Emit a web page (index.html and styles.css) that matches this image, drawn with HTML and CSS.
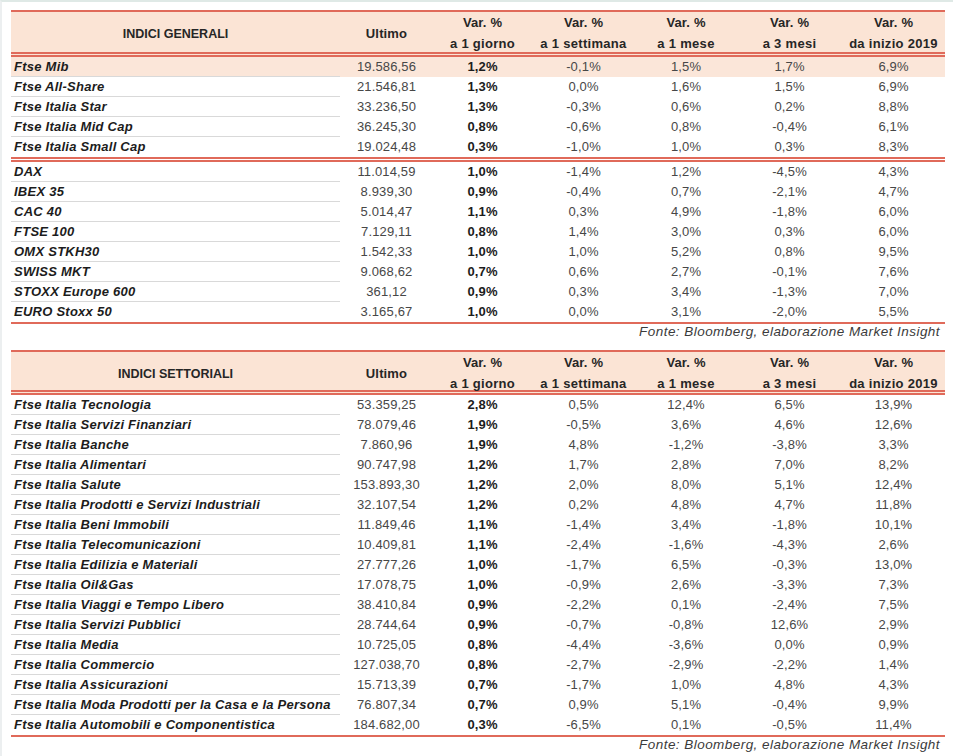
FILE: index.html
```html
<!DOCTYPE html>
<html lang="it">
<head>
<meta charset="utf-8">
<title>Indici</title>
<link rel="stylesheet" href="styles.css">
</head>
<body>
<div class="page">
  <section class="tbl">
    <div class="row head">
      <div class="c name">INDICI GENERALI</div>
      <div class="c">Ultimo</div>
      <div class="c two"><span>Var. %</span><span>a 1 giorno</span></div>
      <div class="c two"><span>Var. %</span><span>a 1 settimana</span></div>
      <div class="c two"><span>Var. %</span><span>a 1 mese</span></div>
      <div class="c two"><span>Var. %</span><span>a 3 mesi</span></div>
      <div class="c two"><span>Var. %</span><span>da inizio 2019</span></div>
    </div>
    <div class="row hl"><div class="c name">Ftse Mib</div><div class="c">19.586,56</div><div class="c b">1,2%</div><div class="c">-0,1%</div><div class="c">1,5%</div><div class="c">1,7%</div><div class="c">6,9%</div></div>
    <div class="row"><div class="c name">Ftse All-Share</div><div class="c">21.546,81</div><div class="c b">1,3%</div><div class="c">0,0%</div><div class="c">1,6%</div><div class="c">1,5%</div><div class="c">6,9%</div></div>
    <div class="row"><div class="c name">Ftse Italia Star</div><div class="c">33.236,50</div><div class="c b">1,3%</div><div class="c">-0,3%</div><div class="c">0,6%</div><div class="c">0,2%</div><div class="c">8,8%</div></div>
    <div class="row"><div class="c name">Ftse Italia Mid Cap</div><div class="c">36.245,30</div><div class="c b">0,8%</div><div class="c">-0,6%</div><div class="c">0,8%</div><div class="c">-0,4%</div><div class="c">6,1%</div></div>
    <div class="row split"><div class="c name">Ftse Italia Small Cap</div><div class="c">19.024,48</div><div class="c b">0,3%</div><div class="c">-1,0%</div><div class="c">1,0%</div><div class="c">0,3%</div><div class="c">8,3%</div></div>
    <div class="row"><div class="c name">DAX</div><div class="c">11.014,59</div><div class="c b">1,0%</div><div class="c">-1,4%</div><div class="c">1,2%</div><div class="c">-4,5%</div><div class="c">4,3%</div></div>
    <div class="row"><div class="c name">IBEX 35</div><div class="c">8.939,30</div><div class="c b">0,9%</div><div class="c">-0,4%</div><div class="c">0,7%</div><div class="c">-2,1%</div><div class="c">4,7%</div></div>
    <div class="row"><div class="c name">CAC 40</div><div class="c">5.014,47</div><div class="c b">1,1%</div><div class="c">0,3%</div><div class="c">4,9%</div><div class="c">-1,8%</div><div class="c">6,0%</div></div>
    <div class="row"><div class="c name">FTSE 100</div><div class="c">7.129,11</div><div class="c b">0,8%</div><div class="c">1,4%</div><div class="c">3,0%</div><div class="c">0,3%</div><div class="c">6,0%</div></div>
    <div class="row"><div class="c name">OMX STKH30</div><div class="c">1.542,33</div><div class="c b">1,0%</div><div class="c">1,0%</div><div class="c">5,2%</div><div class="c">0,8%</div><div class="c">9,5%</div></div>
    <div class="row"><div class="c name">SWISS MKT</div><div class="c">9.068,62</div><div class="c b">0,7%</div><div class="c">0,6%</div><div class="c">2,7%</div><div class="c">-0,1%</div><div class="c">7,6%</div></div>
    <div class="row"><div class="c name">STOXX Europe 600</div><div class="c">361,12</div><div class="c b">0,9%</div><div class="c">0,3%</div><div class="c">3,4%</div><div class="c">-1,3%</div><div class="c">7,0%</div></div>
    <div class="row last"><div class="c name">EURO Stoxx 50</div><div class="c">3.165,67</div><div class="c b">1,0%</div><div class="c">0,0%</div><div class="c">3,1%</div><div class="c">-2,0%</div><div class="c">5,5%</div></div>
  </section>
  <p class="src">Fonte: Bloomberg, elaborazione Market Insight</p>

  <section class="tbl second">
    <div class="row head short">
      <div class="c name">INDICI SETTORIALI</div>
      <div class="c">Ultimo</div>
      <div class="c two"><span>Var. %</span><span>a 1 giorno</span></div>
      <div class="c two"><span>Var. %</span><span>a 1 settimana</span></div>
      <div class="c two"><span>Var. %</span><span>a 1 mese</span></div>
      <div class="c two"><span>Var. %</span><span>a 3 mesi</span></div>
      <div class="c two"><span>Var. %</span><span>da inizio 2019</span></div>
    </div>
    <div class="row"><div class="c name">Ftse Italia Tecnologia</div><div class="c">53.359,25</div><div class="c b">2,8%</div><div class="c">0,5%</div><div class="c">12,4%</div><div class="c">6,5%</div><div class="c">13,9%</div></div>
    <div class="row"><div class="c name">Ftse Italia Servizi Finanziari</div><div class="c">78.079,46</div><div class="c b">1,9%</div><div class="c">-0,5%</div><div class="c">3,6%</div><div class="c">4,6%</div><div class="c">12,6%</div></div>
    <div class="row"><div class="c name">Ftse Italia Banche</div><div class="c">7.860,96</div><div class="c b">1,9%</div><div class="c">4,8%</div><div class="c">-1,2%</div><div class="c">-3,8%</div><div class="c">3,3%</div></div>
    <div class="row"><div class="c name">Ftse Italia Alimentari</div><div class="c">90.747,98</div><div class="c b">1,2%</div><div class="c">1,7%</div><div class="c">2,8%</div><div class="c">7,0%</div><div class="c">8,2%</div></div>
    <div class="row"><div class="c name">Ftse Italia Salute</div><div class="c">153.893,30</div><div class="c b">1,2%</div><div class="c">2,0%</div><div class="c">8,0%</div><div class="c">5,1%</div><div class="c">12,4%</div></div>
    <div class="row"><div class="c name">Ftse Italia Prodotti e Servizi Industriali</div><div class="c">32.107,54</div><div class="c b">1,2%</div><div class="c">0,2%</div><div class="c">4,8%</div><div class="c">4,7%</div><div class="c">11,8%</div></div>
    <div class="row"><div class="c name">Ftse Italia Beni Immobili</div><div class="c">11.849,46</div><div class="c b">1,1%</div><div class="c">-1,4%</div><div class="c">3,4%</div><div class="c">-1,8%</div><div class="c">10,1%</div></div>
    <div class="row"><div class="c name">Ftse Italia Telecomunicazioni</div><div class="c">10.409,81</div><div class="c b">1,1%</div><div class="c">-2,4%</div><div class="c">-1,6%</div><div class="c">-4,3%</div><div class="c">2,6%</div></div>
    <div class="row"><div class="c name">Ftse Italia Edilizia e Materiali</div><div class="c">27.777,26</div><div class="c b">1,0%</div><div class="c">-1,7%</div><div class="c">6,5%</div><div class="c">-0,3%</div><div class="c">13,0%</div></div>
    <div class="row"><div class="c name">Ftse Italia Oil&amp;Gas</div><div class="c">17.078,75</div><div class="c b">1,0%</div><div class="c">-0,9%</div><div class="c">2,6%</div><div class="c">-3,3%</div><div class="c">7,3%</div></div>
    <div class="row"><div class="c name">Ftse Italia Viaggi e Tempo Libero</div><div class="c">38.410,84</div><div class="c b">0,9%</div><div class="c">-2,2%</div><div class="c">0,1%</div><div class="c">-2,4%</div><div class="c">7,5%</div></div>
    <div class="row"><div class="c name">Ftse Italia Servizi Pubblici</div><div class="c">28.744,64</div><div class="c b">0,9%</div><div class="c">-0,7%</div><div class="c">-0,8%</div><div class="c">12,6%</div><div class="c">2,9%</div></div>
    <div class="row"><div class="c name">Ftse Italia Media</div><div class="c">10.725,05</div><div class="c b">0,8%</div><div class="c">-4,4%</div><div class="c">-3,6%</div><div class="c">0,0%</div><div class="c">0,9%</div></div>
    <div class="row"><div class="c name">Ftse Italia Commercio</div><div class="c">127.038,70</div><div class="c b">0,8%</div><div class="c">-2,7%</div><div class="c">-2,9%</div><div class="c">-2,2%</div><div class="c">1,4%</div></div>
    <div class="row"><div class="c name">Ftse Italia Assicurazioni</div><div class="c">15.713,39</div><div class="c b">0,7%</div><div class="c">-1,7%</div><div class="c">1,0%</div><div class="c">4,8%</div><div class="c">4,3%</div></div>
    <div class="row"><div class="c name">Ftse Italia Moda Prodotti per la Casa e la Persona</div><div class="c">76.807,34</div><div class="c b">0,7%</div><div class="c">0,9%</div><div class="c">5,1%</div><div class="c">-0,4%</div><div class="c">9,9%</div></div>
    <div class="row last"><div class="c name">Ftse Italia Automobili e Componentistica</div><div class="c">184.682,00</div><div class="c b">0,3%</div><div class="c">-6,5%</div><div class="c">0,1%</div><div class="c">-0,5%</div><div class="c">11,4%</div></div>
  </section>
  <p class="src">Fonte: Bloomberg, elaborazione Market Insight</p>
</div>
</body>
</html>
```

FILE: styles.css
```css
html, body {
  margin: 0;
  padding: 0;
  background: #ffffff;
}

body {
  border-top: 2px solid #dfe9e6;
  border-left: 2px solid #eceff0;
  min-height: 754px;
  box-sizing: border-box;
}

.page {
  padding: 8px 0 0 9px;
  width: 934px;
  font-family: "Liberation Sans", Arial, sans-serif;
  font-size: 13px;
  color: #474747;
}

.tbl {
  border-top: 2px solid #e06a5a;
}

.row {
  display: grid;
  grid-template-columns: 329px 93px 99px 103px 102px 105px 103px;
  height: 20px;
  box-sizing: border-box;
}

.c {
  display: flex;
  align-items: center;
  justify-content: center;
  white-space: nowrap;
  line-height: 16px;
  letter-spacing: 0.15px;
}

.c.name {
  justify-content: flex-start;
  padding-left: 3px;
  font-weight: bold;
  font-style: italic;
  letter-spacing: 0.25px;
  color: #1c1c1c;
  border-bottom: 1px solid #d9d9d9;
}

.c.b {
  font-weight: bold;
  color: #1c1c1c;
}

.row.hl {
  background: #fbe6d9;
}

.row.split,
.row.last {
  height: auto;
}

.row.split .c,
.row.last .c {
  height: 20px;
  box-sizing: border-box;
}

.row.split {
  border-bottom: 5px double #e06a5a;
}

.row.last {
  border-bottom: 2px solid #e06a5a;
}

.row.split .c.name,
.row.last .c.name {
  border-bottom: none;
}

/* header */
.row.head {
  height: 45px;
  background: #fbe4d5;
  border-bottom: 5px double #e06a5a;
  font-weight: bold;
  color: #262626;
}

.row.head.short {
  height: 43px;
}

.row.head .c.name {
  justify-content: center;
  padding-left: 0;
  font-style: normal;
  letter-spacing: 0;
  border-bottom: none;
  font-size: 12.5px;
  color: #262626;
}

.row.head .c.two {
  flex-direction: column;
  line-height: 21px;
  padding-bottom: 1px;
}

.row.head .c.two span:last-child {
  letter-spacing: 0.3px;
}

.src {
  margin: 0;
  height: 26px;
  text-align: right;
  padding-right: 5px;
  font-style: italic;
  font-size: 13.5px;
  letter-spacing: 0.45px;
  line-height: 16px;
  color: #3b3b3b;
}
```
